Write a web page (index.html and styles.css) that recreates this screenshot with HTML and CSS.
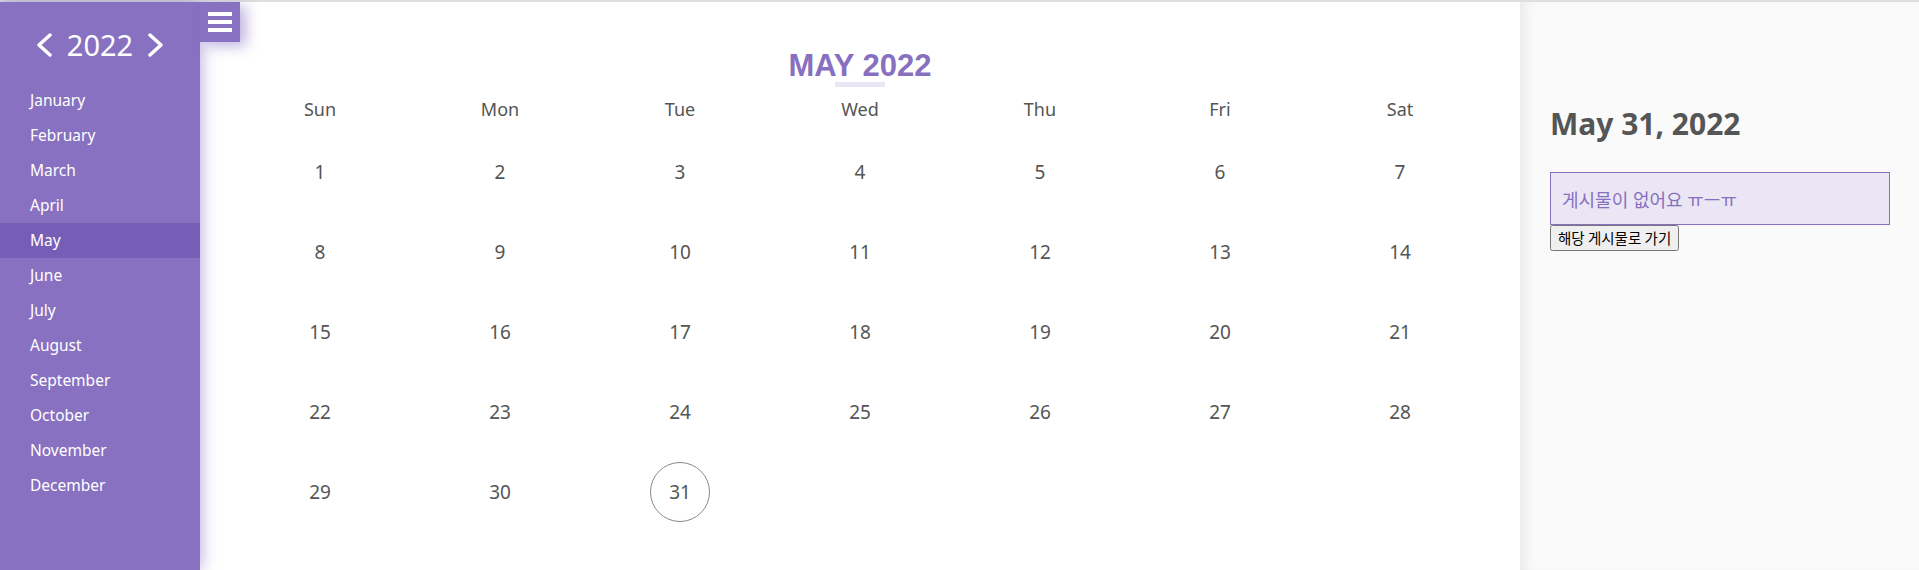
FILE: index.html
```html
<!doctype html>
<html>
    <head>
        <meta charset="utf-8" />
        <meta name="viewport" content="width=device-width, initial-scale=1" />
        <title>Calendar</title>
        <link rel="stylesheet" href="styles.css">
    </head>
    <body>
        <div class="topline"></div>
        <div class="app">
            <aside class="sidebar">
                <button class="menu-toggle" aria-label="menu">
                    <span></span><span></span><span></span>
                </button>
                <div class="year-nav">
                    <svg class="chevron" width="20" height="24" viewBox="0 0 20 24">
                        <polyline points="15,2 4,12 15,22" />
                    </svg>
                    <span class="year">2022</span>
                    <svg class="chevron" width="20" height="24" viewBox="0 0 20 24">
                        <polyline points="5,2 16,12 5,22" />
                    </svg>
                </div>
                <ul class="months">
                    <li>January</li>
                    <li>February</li>
                    <li>March</li>
                    <li>April</li>
                    <li class="active">May</li>
                    <li>June</li>
                    <li>July</li>
                    <li>August</li>
                    <li>September</li>
                    <li>October</li>
                    <li>November</li>
                    <li>December</li>
                </ul>
            </aside>

            <main class="calendar">
                <h1 class="month-title">MAY 2022</h1>
                <div class="title-bar"></div>
                <div class="grid weekdays">
                    <div>Sun</div><div>Mon</div><div>Tue</div><div>Wed</div>
                    <div>Thu</div><div>Fri</div><div>Sat</div>
                </div>
                <div class="grid days">
                    <div><span>1</span></div><div><span>2</span></div><div><span>3</span></div>
                    <div><span>4</span></div><div><span>5</span></div><div><span>6</span></div>
                    <div><span>7</span></div>
                    <div><span>8</span></div><div><span>9</span></div><div><span>10</span></div>
                    <div><span>11</span></div><div><span>12</span></div><div><span>13</span></div>
                    <div><span>14</span></div>
                    <div><span>15</span></div><div><span>16</span></div><div><span>17</span></div>
                    <div><span>18</span></div><div><span>19</span></div><div><span>20</span></div>
                    <div><span>21</span></div>
                    <div><span>22</span></div><div><span>23</span></div><div><span>24</span></div>
                    <div><span>25</span></div><div><span>26</span></div><div><span>27</span></div>
                    <div><span>28</span></div>
                    <div><span>29</span></div><div><span>30</span></div>
                    <div><span class="selected">31</span></div>
                </div>
            </main>

            <section class="detail">
                <h2>May 31, 2022</h2>
                <div class="post-box">게시물이 없어요 ㅠㅡㅠ</div>
                <button class="go-btn">해당 게시물로 가기</button>
            </section>
        </div>
    </body>
</html>
```

FILE: styles.css
```css
html {
    font-family: "Noto Sans", "Noto Sans CJK KR", sans-serif;
}

body {
    margin: 0;
    overflow: hidden;
}

.topline {
    height: 2px;
    background: #dedede;
}

.app {
    display: flex;
    height: 568px;
}

/* sidebar */
.sidebar {
    position: relative;
    z-index: 2;
    width: 200px;
    flex-shrink: 0;
    background: #8771c0;
    color: #fff;
    box-shadow: 0 0 16px rgba(112, 86, 186, 0.55);
}

.menu-toggle {
    position: absolute;
    top: 0;
    left: 100%;
    width: 40px;
    height: 40px;
    padding: 0;
    border: 0;
    background: #8771c0;
    box-shadow: 6px 4px 14px rgba(112, 86, 186, 0.45);
    display: flex;
    flex-direction: column;
    align-items: center;
    justify-content: center;
    gap: 4px;
}

.menu-toggle span {
    display: block;
    width: 24px;
    height: 4px;
    background: #fff;
}

.year-nav {
    height: 77px;
    padding-top: 4px;
    display: flex;
    align-items: center;
    justify-content: center;
    gap: 12px;
}

.chevron polyline {
    fill: none;
    stroke: #fff;
    stroke-width: 3.5;
    stroke-linecap: round;
    stroke-linejoin: round;
}

.year {
    font-size: 29px;
    line-height: 1;
}

.months {
    list-style: none;
    margin: 0;
    padding: 0;
}

.months li {
    height: 35px;
    line-height: 35px;
    padding-left: 30px;
    font-size: 15.5px;
}

.months li.active {
    background: #765db5;
}

/* calendar */
.calendar {
    flex: 1;
    background: #fff;
    padding: 48px 30px 0;
    display: flex;
    flex-direction: column;
    align-items: center;
}

.month-title {
    margin: 0;
    font-family: "Liberation Sans", Arial, sans-serif;
    font-size: 31px;
    line-height: 32px;
    color: #8770c0;
}

.title-bar {
    width: 50px;
    height: 5px;
    background: #ebe6f5;
}

.grid {
    display: grid;
    grid-template-columns: repeat(7, 1fr);
    width: 100%;
    color: #555;
}

.weekdays {
    margin-top: 2px;
    grid-auto-rows: 40px;
    font-size: 18px;
}

.weekdays div,
.days div {
    display: flex;
    align-items: center;
    justify-content: center;
}

.days {
    margin-top: 3px;
    grid-auto-rows: 80px;
    font-size: 19px;
}

.days span {
    width: 60px;
    height: 60px;
    border-radius: 50%;
    display: flex;
    align-items: center;
    justify-content: center;
    box-sizing: border-box;
}

.days span.selected {
    border: 1px solid #888;
}

/* detail panel */
.detail {
    width: 399px;
    flex-shrink: 0;
    box-sizing: border-box;
    padding: 102px 29px 0 30px;
    background: #fafafa;
    box-shadow: inset 12px 0 14px -8px rgba(0, 0, 0, 0.08);
}

.detail h2 {
    margin: 0 0 28px;
    font-size: 30px;
    line-height: 40px;
    color: #555;
}

.post-box {
    height: 53px;
    box-sizing: border-box;
    border: 1px solid #8770c0;
    background: #ebe6f3;
    color: #8770c0;
    font-size: 18px;
    padding-left: 11px;
    display: flex;
    align-items: center;
}

.go-btn {
    font-family: "Noto Sans CJK KR", sans-serif;
    font-size: 14.5px;
    line-height: 20px;
    padding: 1px 6px;
    display: block;
}
```
